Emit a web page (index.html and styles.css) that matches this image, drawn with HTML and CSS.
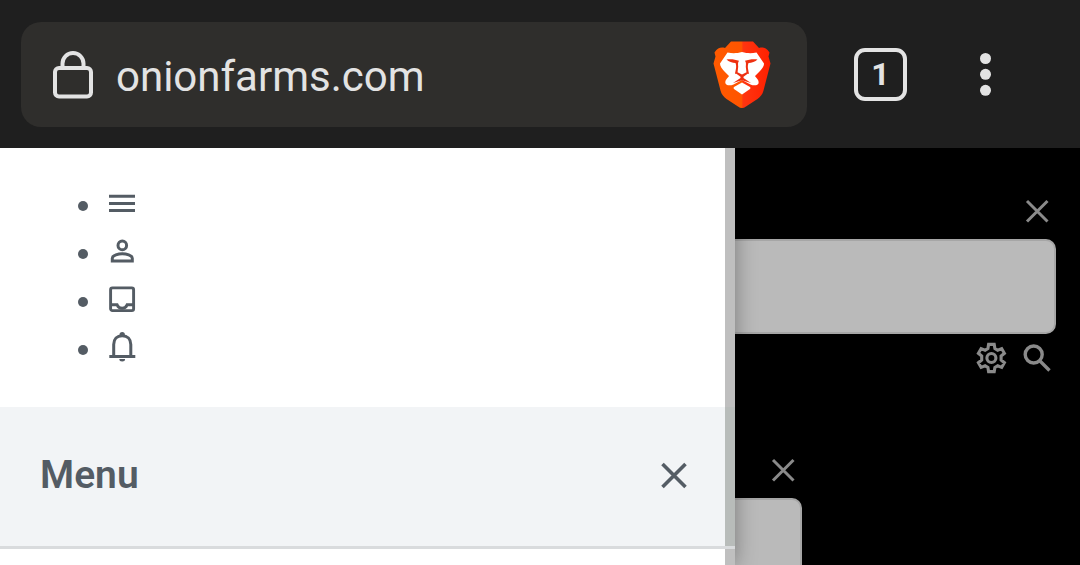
FILE: index.html
```html
<!DOCTYPE html>
<html lang="en">
<head>
<meta charset="utf-8">
<meta name="viewport" content="width=device-width, initial-scale=1">
<title>onionfarms.com</title>
<link rel="stylesheet" href="styles.css">
</head>
<body>
<header class="toolbar">
  <div class="omnibox">
    <button class="btn lock" aria-label="Site information">
      <svg width="42" height="50" viewBox="0 0 42 50" fill="none" stroke="currentColor" stroke-width="4"><rect x="3" y="18" width="36" height="28.500" rx="4"/><path d="M10.500 18v-4.500a10.500 10.500 0 0 1 21 0V18"/></svg>
    </button>
    <input class="url" type="text" value="onionfarms.com" aria-label="Address" spellcheck="false">
    <button class="btn shield" aria-label="Brave Shields">
      <svg width="58" height="68" viewBox="0 0 58 68">
        <defs><linearGradient id="flame" x1="0" x2="1" y1="0" y2="0"><stop offset="0" stop-color="#ff5a00"/><stop offset=".49" stop-color="#ff5500"/><stop offset=".52" stop-color="#ff3510"/><stop offset="1" stop-color="#ff2000"/></linearGradient></defs>
        <path fill="url(#flame)" d="M18 .5h22l6 6.500c4-1 7-.5 10.500 4.500l-1 4 2 7-7 27c-1 4-3 6-6 8.500L33 65.500q-4 3-8 0L13.500 58c-3-2.500-5-4.500-6-8.500l-7-27 2-7-1-4C5 6.500 8 6 12 7z"/>
        <path fill="#fff" d="M14.500 11.500c5 1 9 1 14.500-.5 5.500 1.500 9.500 1.500 14.500.5L51 22.500c0 3-2 5-4 7.500l-5 5c1 2 4.500 4 3.500 7.500-1 2-4.500 2.500-8 1L29 39l-8.500 4.500c-3.500 1.500-7 1-8-1C11.500 39 15 37 16 35l-5-5c-2-2.500-4-4.500-4-7.500z"/>
        <path fill="#fff" d="M29 41.500l8 4.500q1 1 0 2l-8 5.500-8-5.500q-1-1 0-2z"/>
        <g fill="#ee3010"><path d="M13.500 18.500c4-.8 9 0 12.500 1.200-1.500 2-.8 4-.8 6l-.7 6L22 33c.5-4 2-7 .5-11-3-.3-7-1-9-3.500zM44.500 18.500c-4-.8-9 0-12.500 1.200 1.500 2 .8 4 .8 6l.7 6L36 33c-.5-4-2-7-.5-11 3-.3 7-1 9-3.500z"/><path d="M22.300 32l2.200-.7 4.500 2.200 4.500-2.200 2.200.7-5.200 3.700v1.300l7.500 5-9-2.800-9 2.800 7.500-5v-1.300z"/></g>
      </svg>
    </button>
  </div>
  <button class="btn tabs" aria-label="Open tabs">1</button>
  <button class="btn more" aria-label="More options">
    <svg width="12" height="44" viewBox="0 0 12 44" fill="currentColor"><circle cx="5.500" cy="5.500" r="5.500"/><circle cx="5.500" cy="21.300" r="5.500"/><circle cx="5.500" cy="37.300" r="5.500"/></svg>
  </button>
</header>

<div class="viewport">
  <main class="page">
    <section class="panel">
      <div class="panel-top"><button class="btn" aria-label="Close search"><svg width="24" height="24" viewBox="0 0 24 24" stroke="currentColor" stroke-width="3"><path d="M2 2l20.500 20.500m0-20.500l-20.500 20.500"/></svg></button></div>
      <input class="field" type="text" aria-label="Search">
      <div class="panel-actions">
        <button class="btn" aria-label="Settings"><svg width="32" height="32" viewBox="0 0 32 32" fill="none" stroke="currentColor" stroke-width="3.100"><circle cx="16.400" cy="16" r="4.500"/><path d="M13.600 2.400h5.600l.7 4.200 2.800 1.600 4-1.600 2.700 4.700-3.300 2.700v4l3.300 2.700-2.700 4.700-4-1.600-2.800 1.600-.7 4.200h-5.600l-.7-4.200-2.800-1.600-4 1.600-2.700-4.700L6.700 18v-4l-3.300-2.700 2.700-4.700 4 1.600 2.800-1.600z"/></svg></button>
        <button class="btn" aria-label="Run search"><svg width="28" height="28" viewBox="0 0 28 28" fill="none" stroke="currentColor" stroke-width="3.400"><circle cx="10.700" cy="10.500" r="8.500"/><path d="M17 17l9.500 9.500"/></svg></button>
      </div>
    </section>
    <section class="panel panel-narrow">
      <div class="panel-top"><button class="btn" aria-label="Close filter"><svg width="24" height="24" viewBox="0 0 24 24" stroke="currentColor" stroke-width="3"><path d="M2 2l20.500 20.500m0-20.500l-20.500 20.500"/></svg></button></div>
      <input class="field" type="text" aria-label="Filter">
    </section>
  </main>

  <aside class="drawer">
    <nav aria-label="Account">
      <ul class="tabs-list">
        <li><a href="#menu" aria-label="Menu"><svg width="28" height="32" viewBox="0 0 28 32" stroke="currentColor" stroke-width="3"><path d="M1 6.300h26M1 13.400h26M1 20.500h26"/></svg></a></li>
        <li><a href="#account" aria-label="Account"><svg width="28" height="32" viewBox="0 0 28 32" fill="none" stroke="currentColor" stroke-width="3"><circle cx="14.300" cy="7.400" r="4.300"/><path d="M4.300 23.100v-2.900c0-3 6.200-4.500 10-4.500s10 1.500 10 4.500v2.900z"/></svg></a></li>
        <li><a href="#inbox" aria-label="Inbox"><svg width="28" height="32" viewBox="0 0 28 32" fill="none" stroke="currentColor" stroke-width="2.900"><rect x="2.600" y="1.900" width="23" height="22.700" rx="1.800"/><path d="M2.600 18.800h6.500c1 2.300 2.700 3.500 5 3.500s4-1.200 5-3.500h6.500"/></svg></a></li>
        <li><a href="#alerts" aria-label="Alerts"><svg width="28" height="32" viewBox="0 0 28 32" fill="none" stroke="currentColor" stroke-width="3"><path d="M1.300 22.400h26M5.700 22.400V10.500C5.700 5 9 1.700 14.200 1.700s8.600 3.300 8.600 8.800v11.900"/><path fill="currentColor" stroke="none" d="M11.500 2V.7a2.700 2.700 0 0 1 5.400 0V2zM11.300 25.100h5.800a2.900 2.500 0 0 1-5.800 0z"/></svg></a></li>
      </ul>
    </nav>
    <div class="drawer-head">
      <h2 class="drawer-title">Menu</h2>
      <button class="btn drawer-close" aria-label="Close menu"><svg width="26" height="26" viewBox="0 0 26 26" stroke="currentColor" stroke-width="3.600"><path d="M1.500 2l23 23m0-23l-23 23"/></svg></button>
    </div>
  </aside>
</div>
</body>
</html>
```
FILE: styles.css
```css
* { box-sizing: border-box; }

body {
  margin: 0;
  min-height: 100vh;
  display: flex;
  flex-direction: column;
  background: #000;
  font-family: Roboto, "Liberation Sans", sans-serif;
}

svg { display: block; overflow: visible; }

.btn {
  padding: 0;
  border: 0;
  background: none;
  color: inherit;
  font: inherit;
  cursor: pointer;
}

.toolbar {
  display: flex;
  align-items: center;
  padding: 22px 88px 21px 21px;
  background: #1f1f1f;
  color: #e3e3e3;
}

.omnibox {
  flex: 1;
  min-width: 0;
  display: flex;
  align-items: center;
  height: 105px;
  padding: 0 36px 0 31px;
  border-radius: 20px;
  background: #2f2e2c;
}

.url {
  flex: 1;
  min-width: 0;
  margin: 0 22px;
  padding: 4px 0 0;
  border: 0;
  outline: 0;
  background: none;
  color: inherit;
  font-family: inherit;
  font-size: 42px;
  line-height: 56px;
}

.tabs {
  width: 53px;
  height: 53px;
  margin: 0 73px 0 47px;
  padding-bottom: 2px;
  border: 4px solid #e3e3e3;
  border-radius: 11px;
  font-size: 32px;
  font-weight: 700;
  line-height: 40px;
}

.viewport {
  position: relative;
  flex: 1;
  display: flex;
  overflow: hidden;
}

.page {
  flex: 1;
  height: 0;
  padding: 51px 24px 0;
  color: #8a8a8a;
}

.panel-top {
  display: flex;
  justify-content: flex-end;
  padding: 0 7px 16px 0;
}

.field {
  display: block;
  width: 100%;
  height: 95px;
  border: 2px solid #a6a6a6;
  border-radius: 10px;
  background: #bababa;
  font: inherit;
}

.panel-actions {
  display: flex;
  justify-content: flex-end;
  align-items: center;
  gap: 16px;
  padding: 8px 5px 0 0;
}

.panel-narrow {
  width: 778px;
  padding-top: 84px;
}

.drawer {
  position: absolute;
  inset: 0 auto 0 0;
  width: 735px;
  border-right: 10px solid #bfbfbf;
  background: #fff;
  color: #545c64;
  box-shadow: 0 0 20px rgba(0, 0, 0, 0.35);
}

.tabs-list {
  margin: 0;
  padding: 34px 0 33px 78px;
  list-style: none;
}

.tabs-list li {
  display: flex;
  align-items: center;
  gap: 20px;
  height: 48px;
}

.tabs-list li::before {
  content: "";
  width: 10px;
  height: 10px;
  border-radius: 50%;
  background: currentColor;
}

.tabs-list a { color: inherit; }

.drawer-head {
  display: flex;
  align-items: center;
  justify-content: space-between;
  height: 142px;
  margin-right: -10px;
  padding: 0 48px 3px 40px;
  border-bottom: 3px solid #d9dbdd;
  background: #f2f4f6;
  box-shadow: inset -10px 0 #b8bcba;
}

.drawer-title {
  margin: 0;
  font-size: 39px;
  font-weight: 600;
  line-height: 48px;
}
```
